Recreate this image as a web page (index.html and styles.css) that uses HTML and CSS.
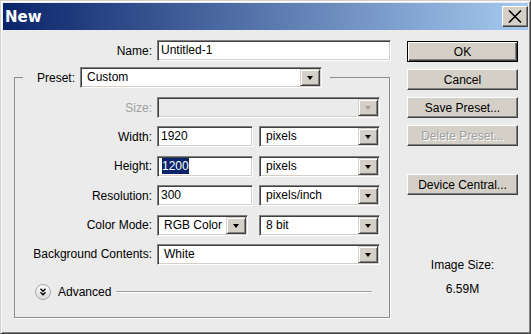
FILE: index.html
```html
<!DOCTYPE html>
<html lang="en">
<head>
<meta charset="UTF-8" />
<title>New</title>
<link rel="stylesheet" href="styles.css">
</head>
<body>
	<!-- Photoshop "New" dialog, classic Windows look -->
	<div class="window">
		<div class="titlebar">
			<span class="title">New</span>
			<button class="close">
				<svg width="26" height="21" viewBox="0 0 26 21"><path d="M7 4.5L19 16.5M19 4.5L7 16.5" stroke="#000" stroke-width="1.6" fill="none"/></svg>
			</button>
		</div>
		<div class="dialog">
			<div class="form">
				<div class="name-row">
					<label class="lbl">Name:</label>
					<div class="field">Untitled-1</div>
				</div>
				<fieldset class="group">
					<legend class="legend">
						<div class="legend-row">
							<label class="lbl">Preset:</label>
							<div class="select w-preset"><span class="value">Custom</span><span class="arrow"></span></div>
						</div>
					</legend>
					<div class="fields">
						<label class="lbl off">Size:</label>
						<div class="ctrl"><div class="select w-full disabled"><span class="value"></span><span class="arrow"></span></div></div>

						<label class="lbl">Width:</label>
						<div class="ctrl">
							<div class="field w-num">1920</div>
							<div class="select w-unit"><span class="value">pixels</span><span class="arrow"></span></div>
						</div>

						<label class="lbl">Height:</label>
						<div class="ctrl">
							<div class="field w-num"><span class="sel">1200</span></div>
							<div class="select w-unit"><span class="value">pixels</span><span class="arrow"></span></div>
						</div>

						<label class="lbl">Resolution:</label>
						<div class="ctrl">
							<div class="field w-num">300</div>
							<div class="select w-unit"><span class="value">pixels/inch</span><span class="arrow"></span></div>
						</div>

						<label class="lbl">Color Mode:</label>
						<div class="ctrl">
							<div class="select w-mode"><span class="value">RGB Color</span><span class="arrow"></span></div>
							<div class="select w-unit"><span class="value">8 bit</span><span class="arrow"></span></div>
						</div>

						<label class="lbl">Background Contents:</label>
						<div class="ctrl"><div class="select w-full"><span class="value">White</span><span class="arrow"></span></div></div>
					</div>
					<div class="advanced">
						<svg class="adv-icon" width="16" height="16" viewBox="0 0 16 16">
							<defs><linearGradient id="g" x1="0" y1="0" x2="0" y2="1"><stop offset="0" stop-color="#fff"/><stop offset="1" stop-color="#d8d8d8"/></linearGradient></defs>
							<circle cx="8" cy="8" r="7.5" fill="url(#g)" stroke="#a8a8a8"/>
							<path d="M5.5 4.8L8 7.2L10.5 4.8M5.5 8.3L8 10.7L10.5 8.3" stroke="#000" stroke-width="1.4" fill="none"/>
						</svg>
						<span class="adv-text">Advanced</span>
						<span class="adv-line"></span>
					</div>
				</fieldset>
			</div>
			<div class="side">
				<button class="btn default">OK</button>
				<button class="btn">Cancel</button>
				<button class="btn">Save Preset...</button>
				<button class="btn disabled">Delete Preset...</button>
				<button class="btn device">Device Central...</button>
				<div class="info">
					<div>Image Size:</div>
					<div class="info-size">6.59M</div>
				</div>
			</div>
		</div>
	</div>
</body>
</html>
```

FILE: styles.css
```css
body {margin: 0; font: 12px "Liberation Sans", Arial, sans-serif; color: #000;}

.window {width: 531px; height: 334px; box-sizing: border-box; background: #ebebeb; border: 1px solid; border-color: #d4d0c8 #404040 #404040 #d4d0c8; box-shadow: inset 1px 1px #fff, inset -1px -1px #808080; padding: 2px;}

.titlebar {height: 27px; display: flex; align-items: center; justify-content: space-between; padding: 0 0 0 2px; background: linear-gradient(to right, #0a246a, #a6caf0);}
.title {color: #fff; font: bold 15px "DejaVu Sans", sans-serif;}
.close {width: 26px; height: 21px; padding: 0; display: block; background: #d4d0c8; border: 1px solid; border-color: #fff #404040 #404040 #fff; box-shadow: inset -1px -1px #808080;}
.close svg {display: block; margin: -1px;}

.dialog {display: flex;}
.form {width: 404px; padding-top: 10px;}
.side {width: 111px; padding-top: 11px; display: flex; flex-direction: column; gap: 7px;}

.lbl {text-align: right; white-space: nowrap;}
.lbl.off {color: #a0a0a0;}

.name-row {display: grid; grid-template-columns: 149px 234px; column-gap: 5px; align-items: center;}

/* sunken edit box */
.field {box-sizing: border-box; height: 21px; background: #fff; border: 1px solid; border-color: #808080 #fff #fff #808080; box-shadow: inset 1px 1px #404040, inset -1px -1px #d4d0c8; padding: 0 3px; line-height: 19px; white-space: nowrap;}
.sel {background: #0a246a; color: #fff; display: inline-block; line-height: 16px; margin-left: 1px;}

/* drop-down */
.select {box-sizing: border-box; height: 21px; display: flex; background: #fff; border: 1px solid; border-color: #808080 #fff #fff #808080; box-shadow: inset 1px 1px #404040, inset -1px -1px #d4d0c8; padding: 1px;}
.select .value {flex: 1; padding-left: 5px; line-height: 17px; white-space: nowrap; overflow: hidden;}
.select .arrow {width: 20px; height: 17px; box-sizing: border-box; background: #d4d0c8; border: 1px solid; border-color: #d4d0c8 #404040 #404040 #d4d0c8; box-shadow: inset 1px 1px #fff, inset -1px -1px #808080; display: flex; align-items: center; justify-content: center;}
.select .arrow::after {content: ""; border-style: solid; border-width: 4px 3.5px 0; border-color: #000 transparent transparent; margin-top: 1px;}
.select.disabled {background: #ebebeb;}
.select.disabled .arrow::after {border-top-color: #a0a0a0;}

.w-preset {width: 242px;}
.w-full {width: 223px;}
.w-num {width: 96px;}
.w-unit {width: 121px;}
.w-mode {width: 91px; margin-right: 5px;}

.group {margin: 6px 0 0 11px; width: 376px; box-sizing: border-box; min-inline-size: 0; border: 1px solid #8c8c8c; box-shadow: 1px 1px #fff; padding: 9px 0 17px;}
.legend {margin-left: 8px; padding: 0 8px 0 14px;}
.legend-row {display: flex; align-items: center; gap: 5px;}

.fields {display: grid; grid-template-columns: 137px auto; column-gap: 5px; grid-auto-rows: 21px; row-gap: 8.4px; align-items: center;}
.ctrl {display: flex; gap: 6px;}

.advanced {display: flex; align-items: center; height: 16px; margin: 19px 17px 0 20px;}
.adv-icon {display: block; flex: none;}
.adv-text {margin-left: 7px;}
.adv-line {flex: 1; margin-left: 5px; border-top: 1px solid #a0a0a0; border-bottom: 1px solid #fff;}

.btn {height: 21px; width: 111px; padding: 0; font: 12px "Liberation Sans", Arial, sans-serif; color: #000; background: #d4d0c8; border: 1px solid; border-color: #fff #404040 #404040 #fff; box-shadow: inset -1px -1px #808080;}
.btn.default {border-color: #000; box-shadow: inset 1px 1px #fff, inset -1px -1px #404040, inset -2px -2px #808080;}
.btn.disabled {color: #a0a0a0; text-shadow: 1px 1px #fff;}
.btn.device {margin-top: 21px;}

.info {margin-top: 56px; text-align: center; line-height: 14px;}
.info-size {margin-top: 10px;}
```
